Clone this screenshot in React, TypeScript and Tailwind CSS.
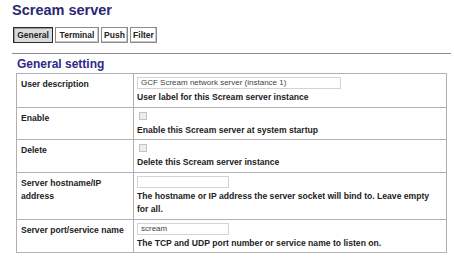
const rows = [
  {
    label: ['User description'],
    kind: 'text',
    value: 'GCF Scream network server (instance 1)',
    width: 'w-[204px]',
    help: ['User label for this Scream server instance'],
  },
  { label: ['Enable'], kind: 'check', help: ['Enable this Scream server at system startup'] },
  { label: ['Delete'], kind: 'check', help: ['Delete this Scream server instance'] },
  {
    label: ['Server hostname/IP', 'address'],
    kind: 'text',
    value: '',
    width: 'w-[92px]',
    help: ['The hostname or IP address the server socket will bind to. Leave empty', 'for all.'],
  },
  {
    label: ['Server port/service name'],
    kind: 'text',
    value: 'scream',
    width: 'w-[92px]',
    help: ['The TCP and UDP port number or service name to listen on.'],
  },
];

const tabs = [
  { name: 'General', width: 'w-[40px]', active: true },
  { name: 'Terminal', width: 'w-[44px]', active: false },
  { name: 'Push', width: 'w-[27px]', active: false },
  { name: 'Filter', width: 'w-[27px]', active: false },
];

export default function App() {
  return (
    <div className="w-[454px] h-[259px] bg-white pl-[12px] pr-[3px] font-['Liberation_Sans',Arial,sans-serif] text-[#222]">
      <h1 className="pt-[2px] text-[14.5px] leading-[17px] font-bold text-[#2b2873]">Scream server</h1>

      {/* Tabs */}
      <div className="flex gap-[2px] mt-[8px] ml-[1px]">
        {tabs.map((t) => (
          <div
            key={t.name}
            className={
              t.active
                ? `${t.width} h-[16px] border border-[#2a2a2a] bg-[#dadada] shadow-[inset_1px_1px_0_#9a9a9a] text-center text-[8.5px] leading-[14px] font-bold`
                : `${t.width} h-[16px] border border-[#8a8a8a] bg-white shadow-[inset_-1px_-1px_0_#c8c8c8] text-center text-[8.5px] leading-[14px] font-bold`
            }
          >
            {t.name}
          </div>
        ))}
      </div>

      <div className="mt-[10px] border-t border-[#8c8c8c]" />

      <div className="pl-[4px] pr-[4px]">
        <h2 className="mt-[3px] pl-[1px] text-[12px] leading-[14px] font-bold text-[#2e2a88]">General setting</h2>

        {/* Settings table */}
        <div className="mt-[2px] border border-[#b0b0b0]">
          {rows.map((r, i) => (
            <div key={i} className={`flex ${i > 0 ? 'border-t border-[#b0b0b0]' : ''}`}>
              <div className="w-[117px] shrink-0 border-r border-[#b0b0b0] pl-[4px] pt-[4px] text-[8.6px] leading-[13.5px] font-bold">
                {r.label.map((l) => (
                  <div key={l}>{l}</div>
                ))}
              </div>
              <div className="flex-1 pl-[3px] pt-[3px] pb-[2px]">
                {r.kind === 'text' ? (
                  <div
                    className={`${r.width} h-[12px] border border-[#d4d4d4] bg-white pl-[3px] flex items-center text-[8px] leading-[10px] text-[#444]`}
                  >
                    {r.value}
                  </div>
                ) : (
                  <div className="ml-[2px] mt-[1px] mb-[4px] w-[8px] h-[8px] border border-[#c2c2c2] bg-[#ececec]" />
                )}
                <div className={`${r.kind === 'text' ? 'mt-[2px]' : ''} text-[8.6px] leading-[13.5px] font-bold`}>
                  {r.help.map((h) => (
                    <div key={h}>{h}</div>
                  ))}
                </div>
              </div>
            </div>
          ))}
        </div>
      </div>
    </div>
  );
}
